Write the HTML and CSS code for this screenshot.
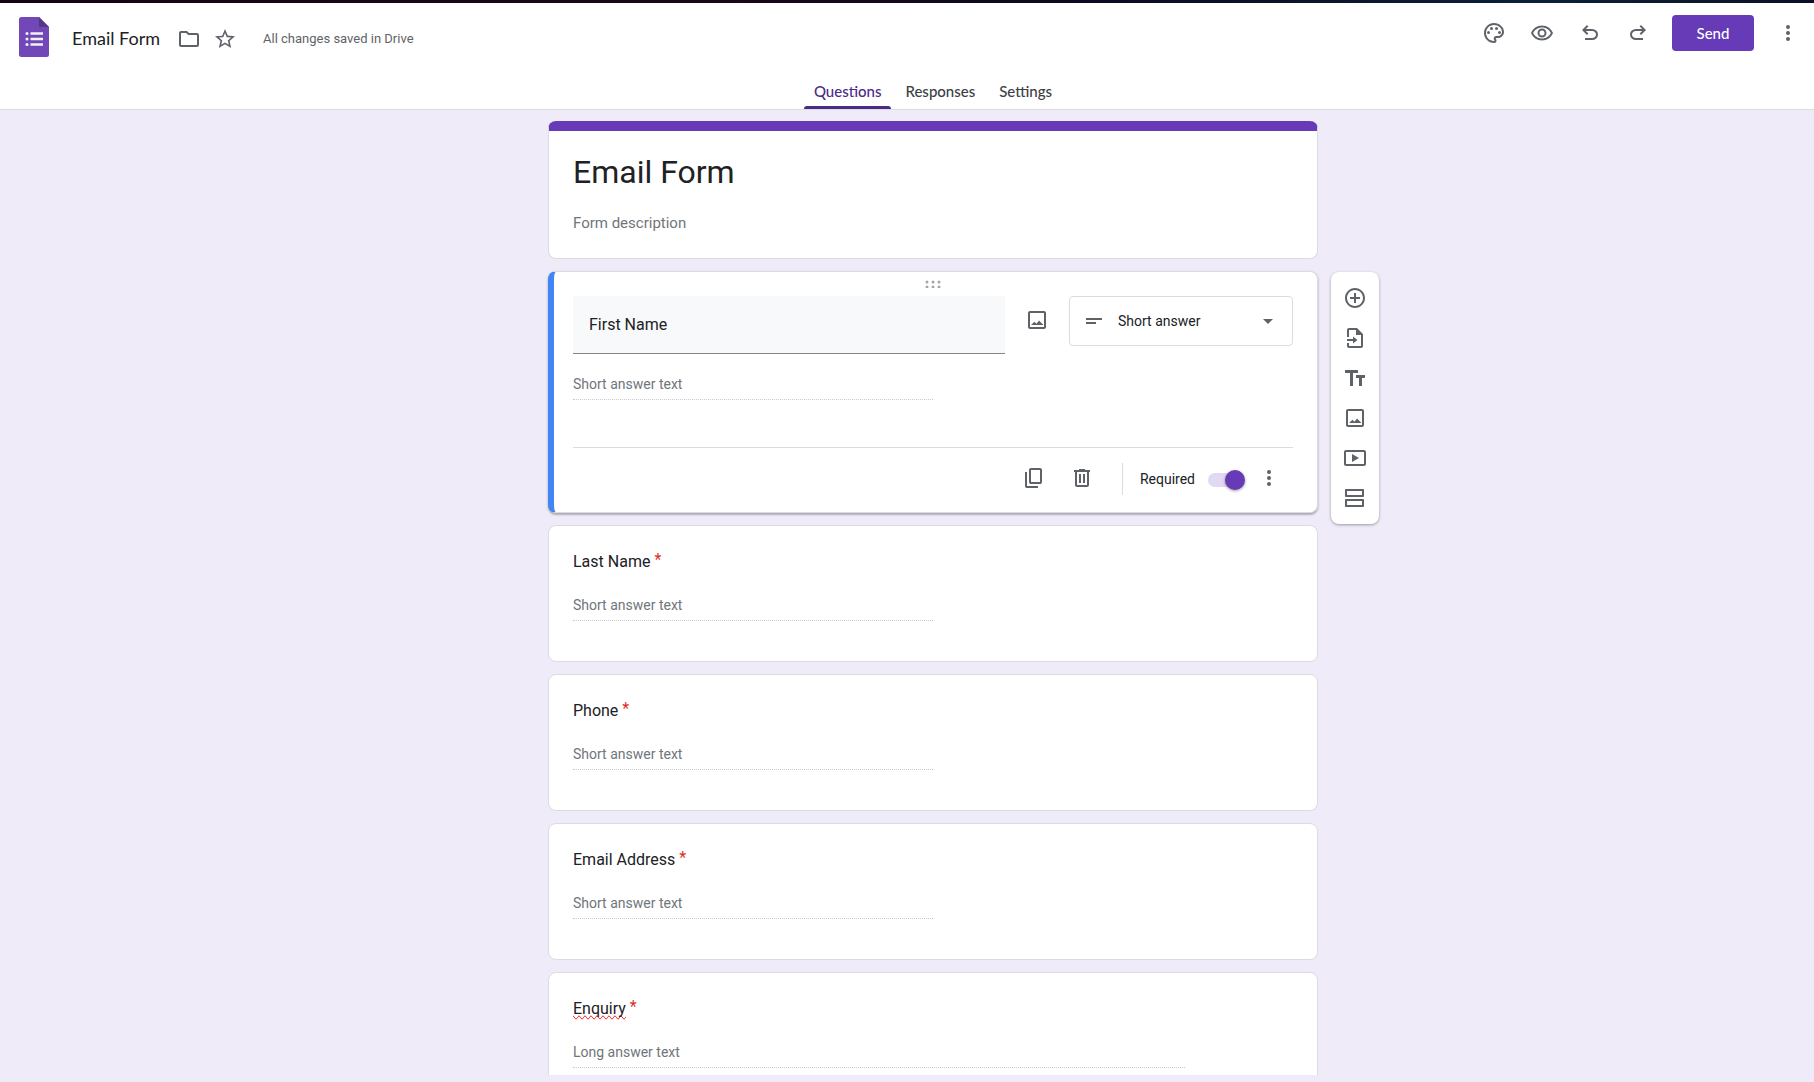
FILE: index.html
```html
<!DOCTYPE html>
<html lang="en">
<head>
<meta charset="utf-8">
<title>Email Form</title>
<meta name="viewport" content="width=device-width, initial-scale=1">
<link rel="stylesheet" href="styles.css">
</head>
<body>
<svg class="sprite" aria-hidden="true">
  <symbol id="i-image" viewBox="0 0 24 24"><path d="M19 5v14H5V5h14m0-2H5c-1.100 0-2 .9-2 2v14c0 1.100.9 2 2 2h14c1.100 0 2-.9 2-2V5c0-1.100-.9-2-2-2zm-5 9.500l-2.500 3.300L9.500 13.800 6 17h12.500z"/></symbol>
  <symbol id="i-more" viewBox="0 0 24 24"><circle cx="12" cy="6" r="2"/><circle cx="12" cy="12" r="2"/><circle cx="12" cy="18" r="2"/></symbol>
</svg>

<header class="header">
  <div class="bar">
    <div class="brand">
      <a class="logo" href="#" aria-label="Forms home">
        <svg width="30" height="40" viewBox="0 0 30 40"><path fill="#7248b9" d="M2.500 0H20l10 10v27.500a2.500 2.500 0 0 1-2.500 2.500h-25A2.500 2.500 0 0 1 0 37.500v-35A2.500 2.500 0 0 1 2.500 0z"/><path fill="#553689" d="M20 0l10 10H20z"/><g fill="#f1f1f1"><circle cx="8" cy="16.500" r="1.500"/><circle cx="8" cy="22" r="1.500"/><circle cx="8" cy="27.500" r="1.500"/><path d="M11.500 15.300h12.500v2.400H11.500zM11.500 20.800h12.500v2.400H11.500zM11.500 26.300h12.500v2.400H11.500z"/></g></svg>
      </a>
      <span class="doc-name">Email Form</span>
      <button class="icon-btn small" type="button" aria-label="Move to folder"><svg width="24" height="24" viewBox="0 0 24 24"><path d="M9.170 6l2 2H20v10H4V6h5.170M10 4H4c-1.100 0-1.990.9-1.990 2L2 18c0 1.100.9 2 2 2h16c1.100 0 2-.9 2-2V8c0-1.100-.9-2-2-2h-8l-2-2z"/></svg></button>
      <button class="icon-btn small" type="button" aria-label="Star"><svg width="24" height="24" viewBox="0 0 24 24"><path d="M22 9.240l-7.190-.62L12 2 9.190 8.630 2 9.240l5.460 4.730L5.820 21 12 17.270 18.180 21l-1.630-7.030L22 9.240zM12 15.400l-3.760 2.270 1-4.280-3.320-2.880 4.380-.38L12 6.100l1.710 4.040 4.380.38-3.320 2.880 1 4.280L12 15.400z"/></svg></button>
      <span class="saved">All changes saved in Drive</span>
    </div>
    <div class="actions">
      <button class="icon-btn" type="button" aria-label="Customize theme"><svg width="24" height="24" viewBox="0 0 24 24"><path d="M12 22C6.490 22 2 17.510 2 12S6.490 2 12 2s10 4.040 10 9c0 3.310-2.690 6-6 6h-1.770c-.28 0-.5.22-.5.5 0 .12.050.23.130.33.41.47.640 1.060.640 1.670A2.500 2.500 0 0 1 12 22zm0-18c-4.410 0-8 3.590-8 8s3.590 8 8 8c.28 0 .5-.22.5-.5a.54.54 0 0 0-.14-.35c-.41-.46-.63-1.050-.63-1.650a2.500 2.500 0 0 1 2.500-2.500H16c2.210 0 4-1.790 4-4 0-3.860-3.590-7-8-7z"/><circle cx="6.500" cy="11.500" r="1.500"/><circle cx="9.500" cy="7.500" r="1.500"/><circle cx="14.500" cy="7.500" r="1.500"/><circle cx="17.500" cy="11.500" r="1.500"/></svg></button>
      <button class="icon-btn" type="button" aria-label="Preview"><svg width="24" height="24" viewBox="0 0 24 24"><path d="M12 6.500c3.790 0 7.170 2.130 8.820 5.500-1.650 3.370-5.030 5.500-8.820 5.500S4.830 15.370 3.180 12C4.830 8.630 8.210 6.500 12 6.500m0-2C7 4.500 2.730 7.610 1 12c1.730 4.390 6 7.500 11 7.500s9.270-3.110 11-7.500c-1.730-4.390-6-7.500-11-7.500zm0 5a2.500 2.500 0 0 1 0 5 2.500 2.500 0 0 1 0-5m0-2c-2.480 0-4.500 2.020-4.500 4.500s2.020 4.500 4.500 4.500 4.500-2.020 4.500-4.500-2.020-4.500-4.500-4.500z"/></svg></button>
      <button class="icon-btn" type="button" aria-label="Undo"><svg width="24" height="24" viewBox="0 0 24 24"><path d="M7 19v-2h7.100q1.575 0 2.738-1T18 13.500 16.838 11 14.100 10H7.800l2.600 2.600L9 14 4 9l5-5 1.400 1.400L7.800 8h6.300q2.425 0 4.163 1.575T20 13.500t-1.737 3.925T14.100 19z"/></svg></button>
      <button class="icon-btn" type="button" aria-label="Redo"><svg width="24" height="24" viewBox="0 0 24 24"><path d="M9.900 19q-2.425 0-4.162-1.575T4 13.500t1.738-3.925T9.900 8h6.300l-2.600-2.600L15 4l5 5-5 5-1.400-1.400 2.600-2.600H9.900q-1.575 0-2.737 1T6 13.500 7.163 16 9.900 17H17v2z"/></svg></button>
      <button class="send" type="button">Send</button>
      <button class="icon-btn" type="button" aria-label="More"><svg width="24" height="24"><use href="#i-more"/></svg></button>
    </div>
  </div>
  <nav class="tabs" aria-label="Form sections">
    <a class="tab active" href="#questions" aria-current="page">Questions</a>
    <a class="tab" href="#responses">Responses</a>
    <a class="tab" href="#settings">Settings</a>
  </nav>
</header>

<main class="canvas" id="questions">
  <section class="card title-card">
    <input class="form-title" type="text" value="Email Form" aria-label="Form title">
    <input class="form-desc" type="text" placeholder="Form description" aria-label="Form description">
  </section>

  <section class="card question active">
    <button class="drag" type="button" aria-label="Reorder question"><svg width="16" height="8" viewBox="0 0 16 8"><circle cx="2" cy="2" r="1.500"/><circle cx="8" cy="2" r="1.500"/><circle cx="14" cy="2" r="1.500"/><circle cx="2" cy="7" r="1.500"/><circle cx="8" cy="7" r="1.500"/><circle cx="14" cy="7" r="1.500"/></svg></button>
    <div class="edit-row">
      <input class="q-input" type="text" value="First Name" aria-label="Question">
      <button class="icon-btn" type="button" aria-label="Add image"><svg width="24" height="24"><use href="#i-image"/></svg></button>
      <div class="type">
        <select class="type-select" aria-label="Question type"><option>Short answer</option><option>Paragraph</option></select>
        <svg class="type-icon" width="24" height="24" viewBox="0 0 24 24"><path d="M4 9h16v2H4zM4 13h10v2H4z"/></svg>
        <svg class="type-arrow" width="24" height="24" viewBox="0 0 24 24"><path d="M7 10l5 5 5-5z"/></svg>
      </div>
    </div>
    <input class="answer" type="text" placeholder="Short answer text" aria-label="Answer to First Name" disabled>
    <div class="footer">
      <button class="icon-btn" type="button" aria-label="Duplicate"><svg width="24" height="24" viewBox="0 0 24 24"><path d="M9 18q-.825 0-1.412-.587T7 16V4q0-.825.588-1.412T9 2h9q.825 0 1.413.588T20 4v12q0 .825-.587 1.413T18 18zm0-2h9V4H9zm-4 6q-.825 0-1.412-.587T3 20V6h2v14h11v2z"/></svg></button>
      <button class="icon-btn" type="button" aria-label="Delete"><svg width="24" height="24" viewBox="0 0 24 24"><path d="M15 4V3H9v1H4v2h1v13c0 1.100.9 2 2 2h10c1.100 0 2-.9 2-2V6h1V4h-5zm2 15H7V6h10v13zM9 8h2v9H9zm4 0h2v9h-2z"/></svg></button>
      <span class="divider"></span>
      <label class="required-label">Required <input class="toggle" type="checkbox" checked></label>
      <button class="icon-btn" type="button" aria-label="More options"><svg width="24" height="24"><use href="#i-more"/></svg></button>
    </div>
  </section>

  <aside class="tools" aria-label="Add to form">
    <button class="tool" type="button" aria-label="Add question"><svg width="24" height="24" viewBox="0 0 24 24"><path d="M13 7h-2v4H7v2h4v4h2v-4h4v-2h-4V7zm-1-5C6.480 2 2 6.480 2 12s4.480 10 10 10 10-4.480 10-10S17.520 2 12 2zm0 18c-4.410 0-8-3.590-8-8s3.590-8 8-8 8 3.590 8 8-3.590 8-8 8z"/></svg></button>
    <button class="tool" type="button" aria-label="Import questions"><svg width="24" height="24" viewBox="0 0 24 24"><path d="M14 2H6c-1.100 0-2 .9-2 2v7h2V4h7v5h5v11H6v-3H4v3c0 1.100.9 2 2 2h12c1.100 0 2-.9 2-2V8l-6-6zM4 13v2h6v2.500l4.500-3.500L10 10.500V13z"/></svg></button>
    <button class="tool" type="button" aria-label="Add title and description"><svg width="24" height="24" viewBox="0 0 24 24"><path d="M2 4v3h5v13h3V7h5V4zM22 9h-9v3h3v8h3v-8h3z"/></svg></button>
    <button class="tool" type="button" aria-label="Add image"><svg width="24" height="24"><use href="#i-image"/></svg></button>
    <button class="tool" type="button" aria-label="Add video"><svg width="24" height="24" viewBox="0 0 24 24"><path d="M9 8v8l7-4zM21 4H3c-1.100 0-2 .9-2 2v12c0 1.100.9 2 2 2h18c1.100 0 2-.9 2-2V6c0-1.100-.9-2-2-2zm0 14H3V6h18z"/></svg></button>
    <button class="tool" type="button" aria-label="Add section"><svg width="24" height="24" viewBox="0 0 24 24"><path d="M19 5v4H4V5h15m1-2H3c-.55 0-1 .45-1 1v6c0 .55.450 1 1 1h17c.55 0 1-.45 1-1V4c0-.55-.45-1-1-1zM19 15v4H4v-4h15m1-2H3c-.55 0-1 .45-1 1v6c0 .55.450 1 1 1h17c.55 0 1-.45 1-1v-6c0-.55-.45-1-1-1z"/></svg></button>
  </aside>

  <section class="card question">
    <label class="q-label" for="last-name">Last Name <span class="star">*</span></label>
    <input class="answer" id="last-name" type="text" placeholder="Short answer text" disabled>
  </section>
  <section class="card question">
    <label class="q-label" for="phone">Phone <span class="star">*</span></label>
    <input class="answer" id="phone" type="text" placeholder="Short answer text" disabled>
  </section>
  <section class="card question">
    <label class="q-label" for="email">Email Address <span class="star">*</span></label>
    <input class="answer" id="email" type="text" placeholder="Short answer text" disabled>
  </section>
  <section class="card question">
    <label class="q-label" for="enquiry"><span class="misspelt">Enquiry</span> <span class="star">*</span></label>
    <input class="answer long" id="enquiry" type="text" placeholder="Long answer text" disabled>
  </section>
</main>
</body>
</html>
```
FILE: styles.css
```css
:root {
  --purple: #673ab7;
  --purple-dark: #4c2b87;
  --page: #f0ebf8;
  --line: #dadce0;
  --ink: #202124;
  --muted: #70757a;
  --icon: #5f6368;
  --offset: 52px;
}

* { box-sizing: border-box; }

body {
  margin: 0;
  height: 100vh;
  display: flex;
  flex-direction: column;
  padding-bottom: 7px;
  overflow: hidden;
  background: var(--page);
  color: var(--ink);
  font: 14px/20px Roboto, Arial, sans-serif;
}

button, input, select { font: inherit; color: inherit; }
button { border: 0; padding: 0; background: none; cursor: pointer; }
svg { display: block; fill: currentColor; }
.sprite { position: absolute; width: 0; height: 0; }

.icon-btn {
  display: grid;
  place-items: center;
  width: 48px;
  height: 48px;
  flex: none;
  color: var(--icon);
}
.icon-btn.small { width: 36px; height: 36px; }

/* Header */
.header {
  flex: none;
  border-bottom: 1px solid var(--line);
  background: #fff;
}
.header::before {
  content: "";
  display: block;
  height: 3px;
  background: linear-gradient(90deg, #150313, #1a0618 40%, #0b0a20 60%, #0b2038 85%, #0d1024);
}
.bar {
  display: flex;
  justify-content: space-between;
  align-items: flex-start;
  padding: 6px 2px 0 19px;
}
.brand { display: flex; align-items: center; padding-top: 8px; }
.logo { margin-right: 23px; }
.doc-name {
  font: 18px/24px Lato, sans-serif;
  padding-top: 2px;
  margin-right: 11px;
}
.brand .icon-btn { padding-top: 4px; }
.saved {
  padding: 4px 0 0 20px;
  font-size: 13px;
  color: var(--icon);
}
.actions { display: flex; align-items: center; }
.send {
  width: 82px;
  height: 36px;
  margin: 0 10px;
  border-radius: 4px;
  background: var(--purple);
  color: #fff;
  font: 500 15px/20px Lato, sans-serif;
}
.tabs {
  display: flex;
  justify-content: center;
  gap: 4px;
  padding-left: var(--offset);
  margin-top: 16px;
}
.tab {
  padding: 8px 10px 0;
  color: #3c4043;
  font: 500 15px/20px Lato, sans-serif;
  text-decoration: none;
}
.tab::after {
  content: "";
  display: block;
  height: 3px;
  margin: 5px -10px 0;
  border-radius: 3px 3px 0 0;
}
.tab.active { color: var(--purple-dark); }
.tab.active::after { background: var(--purple-dark); }

/* Form column with the toolbar beside it */
.canvas {
  flex: 1;
  min-height: 0;
  overflow: hidden;
  display: grid;
  grid-template-columns: 1fr minmax(0, 770px) 1fr;
  align-content: start;
  gap: 12px;
  padding: 11px 0 0 var(--offset);
}
.card {
  grid-column: 2;
  border: 1px solid var(--line);
  border-radius: 8px;
  background: #fff;
  padding: 22px 24px 24px;
}

.title-card {
  border-top: 10px solid var(--purple);
  padding: 19px 24px 25px;
}
.form-title, .form-desc {
  display: block;
  width: 100%;
  border: 0;
  padding: 0;
  background: none;
}
.form-title { height: 44px; font-size: 32px; }
.form-desc { height: 20px; margin-top: 19px; font-size: 15px; }
::placeholder { color: var(--muted); opacity: 1; }

.q-label { display: block; font-size: 16px; line-height: 24px; }
.star { color: #d93025; vertical-align: 2px; }
.misspelt {
  text-decoration: underline wavy #f00 1px;
  text-decoration: spelling-error;
}
.answer {
  display: block;
  width: 50%;
  height: 28px;
  margin: 19px 0 16px;
  padding: 0 0 4px;
  border: 0;
  border-bottom: 1px dotted #c8cacd;
  background: none;
  font-size: 14px;
}
.answer.long { width: 85%; }

.question.active {
  border-left: 6px solid #4285f4;
  padding: 0 24px 0 19px;
  box-shadow: 0 2px 2px rgba(0, 0, 0, .2), 0 1px 3px rgba(0, 0, 0, .15);
}
.drag {
  display: flex;
  width: 100%;
  height: 24px;
  justify-content: center;
  padding-top: 8px;
  color: #a6a6a6;
}
.edit-row { display: flex; align-items: flex-start; }
.q-input {
  flex: 1;
  min-width: 0;
  height: 58px;
  padding: 0 16px;
  border: 0;
  border-bottom: 1px solid #80868b;
  border-radius: 0;
  background: #f8f9fb;
  font-size: 16px;
}
.edit-row .icon-btn { margin: 0 8px; }
.type { display: grid; width: 224px; align-items: center; }
.type > * { grid-area: 1 / 1; }
.type-select {
  appearance: none;
  height: 50px;
  padding: 0 48px;
  border: 1px solid var(--line);
  border-radius: 4px;
  background: #fff;
}
.type-icon, .type-arrow { color: var(--icon); pointer-events: none; }
.type-icon { margin-left: 13px; }
.type-arrow { justify-self: end; margin-right: 13px; }
.active .answer { margin: 18px 0 47px; }
.footer {
  display: flex;
  align-items: center;
  justify-content: flex-end;
  height: 65px;
  padding-bottom: 2px;
  border-top: 1px solid var(--line);
}
.footer .icon-btn { padding-bottom: 3px; }
.divider { width: 1px; height: 32px; margin: 0 17px 0 16px; background: var(--line); }
.required-label { display: flex; align-items: center; gap: 13px; }
.toggle {
  appearance: none;
  width: 36px;
  height: 14px;
  margin: 2px 1px 0 0;
  border-radius: 7px;
  background: #e1d8f1;
}
.toggle::before {
  content: "";
  display: block;
  width: 20px;
  height: 20px;
  margin: -3px 0 0 17px;
  border-radius: 50%;
  background: var(--purple);
  box-shadow: 0 1px 3px rgba(0, 0, 0, .4);
}

.tools {
  grid-column: 3;
  grid-row: 2 / span 2;
  align-self: start;
  justify-self: start;
  width: 48px;
  margin: 1px;
  padding: 6px 4px;
  border-radius: 8px;
  background: #fff;
  box-shadow: 0 1px 3px rgba(0, 0, 0, .35);
}
.tool {
  display: grid;
  place-items: center;
  width: 40px;
  height: 40px;
  color: var(--icon);
}
```
